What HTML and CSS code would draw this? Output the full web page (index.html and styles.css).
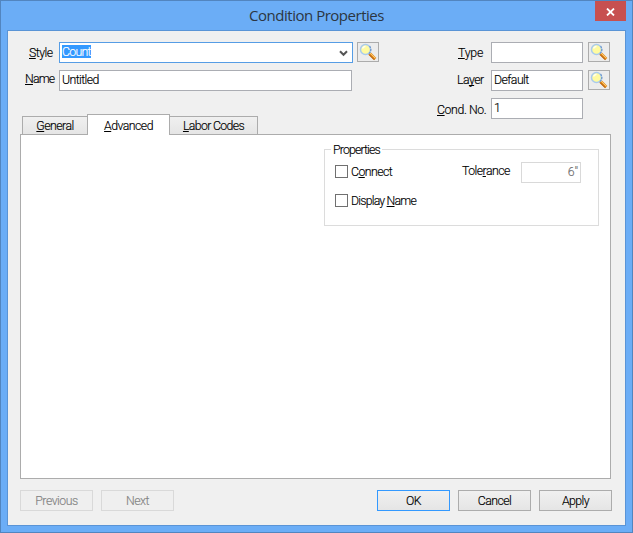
FILE: index.html
```html
<!DOCTYPE html>
<html lang="en">
<head>
<meta charset="utf-8">
<title>Condition Properties</title>
<link rel="stylesheet" href="styles.css">
</head>
<body>
<svg class="defs" width="0" height="0" aria-hidden="true">
  <defs>
    <symbol id="magnifier" viewBox="0 0 18 18">
      <path d="M10.500 10.500l5.700 5.700" stroke="#e58a1c" stroke-width="3.200"/>
      <path d="M11 10l5.300 5.300" stroke="#f8cc72" stroke-width="1"/>
      <path d="M10 11.500l5.300 5.300" stroke="#a85a16" stroke-width="1"/>
      <circle cx="6.500" cy="6.500" r="5" fill="#fffba0" stroke="#a9cbed" stroke-width="1.500"/>
      <path d="M10.600 3.200a5.200 5.200 0 0 1-1 7.700" fill="none" stroke="#6c94c8" stroke-width="1.200" stroke-dasharray="2 1"/>
      <path d="M3.500 5.500c.5-1.600 1.500-2 3-2.300" fill="none" stroke="#fffff0" stroke-width="1.500"/>
    </symbol>
  </defs>
</svg>
<div class="window">
  <header class="titlebar">
    <h1>Condition Properties</h1>
    <div class="close"><svg width="9" height="8" viewBox="0 0 9 8"><path d="M1 .5l7 7M8 .5l-7 7" stroke="#fff" stroke-width="1.800"/></svg></div>
  </header>
  <main class="client">
    <section class="form">
      <div class="left">
        <div class="row">
          <label class="l-style"><u>S</u>tyle</label>
          <div class="input combo"><span class="selected">Count</span><svg width="9" height="7" viewBox="0 0 9 7"><path d="M1 1.200l3.500 3.600L8 1.200" fill="none" stroke="#555" stroke-width="2"/></svg></div>
          <div class="lookup"><svg width="18" height="18"><use href="#magnifier"/></svg></div>
        </div>
        <div class="row">
          <label class="l-name"><u>N</u>ame</label>
          <div class="input name">Untitled</div>
        </div>
      </div>
      <div class="right">
        <div class="row">
          <label class="l-type"><u>T</u>ype</label>
          <div class="input"></div>
          <div class="lookup"><svg width="18" height="18"><use href="#magnifier"/></svg></div>
        </div>
        <div class="row">
          <label class="l-layer">La<u>y</u>er</label>
          <div class="input">Default</div>
          <div class="lookup"><svg width="18" height="18"><use href="#magnifier"/></svg></div>
        </div>
        <div class="row">
          <label class="l-cond"><u>C</u>ond. No.</label>
          <div class="input number">1</div>
        </div>
      </div>
    </section>
    <nav class="tabs">
      <div class="tab general"><span><u>G</u>eneral</span></div>
      <div class="tab active"><span><u>A</u>dvanced</span></div>
      <div class="tab labor"><span><u>L</u>abor Codes</span></div>
    </nav>
    <section class="panel">
      <div class="group">
        <div class="legend"><span>Properties</span></div>
        <div class="options">
          <div class="checks">
            <div class="check"><i></i><span>C<u>o</u>nnect</span></div>
            <div class="check display"><i></i><span>Display <u>N</u>ame</span></div>
          </div>
          <span class="t-tolerance">Tole<u>r</u>ance</span>
          <div class="input tolerance">6"</div>
        </div>
      </div>
    </section>
    <footer class="actions">
      <div class="button disabled previous">Previous</div>
      <div class="button disabled">Next</div>
      <div class="button default">OK</div>
      <div class="button">Cancel</div>
      <div class="button">Apply</div>
    </footer>
  </main>
</div>
</body>
</html>
```
FILE: styles.css
```css
* { box-sizing: border-box; }
body {
  margin: 0;
  font: 300 12.3px/17px Roboto, "Liberation Sans", sans-serif;
  letter-spacing: -0.55px;
  color: #000;
  white-space: nowrap;
  -webkit-text-stroke: 0.15px currentColor;
}
svg { display: block; }
.defs { display: none; }
u { text-underline-offset: 1px; text-decoration-thickness: 1px; text-decoration-skip-ink: none; }
.window {
  width: 633px;
  height: 533px;
  border: 1px solid #5285bf;
  background: #6badf6;
  padding: 0 6px 6px;
}
.titlebar { height: 29px; display: flex; }
h1 {
  flex: 1;
  margin: 0 0 0 31px;
  padding-top: 4px;
  text-align: center;
  font: 15px/21px "Open Sans", "Noto Sans", sans-serif;
  letter-spacing: -0.48px;
  color: #2b3642;
  -webkit-text-stroke: 0;
}
.close {
  width: 31px;
  height: 20px;
  background: #c75050;
  display: flex;
  align-items: center;
  justify-content: center;
  padding-top: 2px;
}
.client {
  width: 619px;
  height: 496px;
  border: 1px solid #5a94d6;
  background: #f0f0f0;
  display: flex;
  flex-direction: column;
}
.form { height: 83px; padding-top: 11px; display: flex; justify-content: space-between; }
.right { width: 186px; margin-right: 15px; }
.row { display: flex; height: 28px; }
label { padding-top: 3px; flex: none; }
.left label { width: 51px; }
.right label { width: 67px; }
.l-style { padding-left: 21px; }
.l-name { padding-left: 17px; padding-top: 1px; letter-spacing: -0.8px; }
.l-type { padding-left: 34px; letter-spacing: -0.2px; }
.l-layer { padding-left: 33px; padding-top: 2px; }
.l-cond { padding-left: 13px; padding-top: 4px; letter-spacing: -0.4px; }
.input {
  width: 92px;
  height: 21px;
  flex: none;
  border: 1px solid #abadb3;
  background: #fff;
  padding: 1px 2px;
}
.combo { width: 294px; border-color: #569de5; display: flex; justify-content: space-between; }
.combo svg { margin: 6px 2px 0 0; }
.selected { height: 13px; margin-top: 1px; line-height: 15px; background: #3399ff; color: #fff; letter-spacing: -0.75px; }
.name { width: 293px; letter-spacing: -0.6px; }
.number { padding-top: 1px; }
.lookup {
  width: 22px;
  height: 20px;
  margin-left: 4px;
  border: 1px solid #acacac;
  background: #ececec;
  padding: 0 1px;
}
.right .lookup { margin-left: 5px; }
.tabs { display: flex; height: 20px; padding-left: 14px; align-items: flex-end; position: relative; z-index: 1; }
.tab {
  height: 18px;
  border: 1px solid #acacac;
  border-bottom: 0;
  background: linear-gradient(#f0f0f0, #e5e5e5);
  display: flex;
  justify-content: center;
  padding-top: 1px;
}
.general { width: 65px; border-right: 0; }
.active { width: 83px; height: 21px; margin-bottom: -1px; background: #fff; padding-top: 3px; }
.labor { width: 88px; border-left: 0; letter-spacing: -0.65px; }
.panel { width: 591px; height: 345px; margin-left: 12px; border: 1px solid #acacac; background: #fff; }
.group { width: 275px; height: 77px; margin: 14px 0 0 303px; border: 1px solid #dcdcdc; }
.legend { height: 15px; margin-top: -8px; padding-left: 6px; letter-spacing: -0.85px; }
.legend span { display: inline-block; background: #fff; padding: 0 2px; }
.options { display: flex; padding: 5px 0 0 10px; }
.checks { width: 127px; padding-top: 3px; }
.check { display: flex; height: 29px; }
.check i { width: 13px; height: 13px; border: 1px solid #707070; margin-right: 3px; }
.check span { margin-top: -1px; }
.display { letter-spacing: -0.8px; }
.t-tolerance { width: 59px; padding-top: 1px; }
.tolerance { width: 60px; border-color: #d9d9d9; color: #6d6d6d; text-align: right; letter-spacing: 0; }
.actions { display: flex; gap: 8px; margin: 11px 0 0 12px; }
.button {
  width: 73px;
  height: 21px;
  border: 1px solid #acacac;
  background: linear-gradient(#f0f0f0, #e5e5e5);
  text-align: center;
  padding-top: 2px;
}
.disabled { border-color: #d9d9d9; background: #efefef; color: #838383; }
.previous { letter-spacing: -0.5px; }
.default { border-color: #3399ff; margin-left: 195px; }
```
